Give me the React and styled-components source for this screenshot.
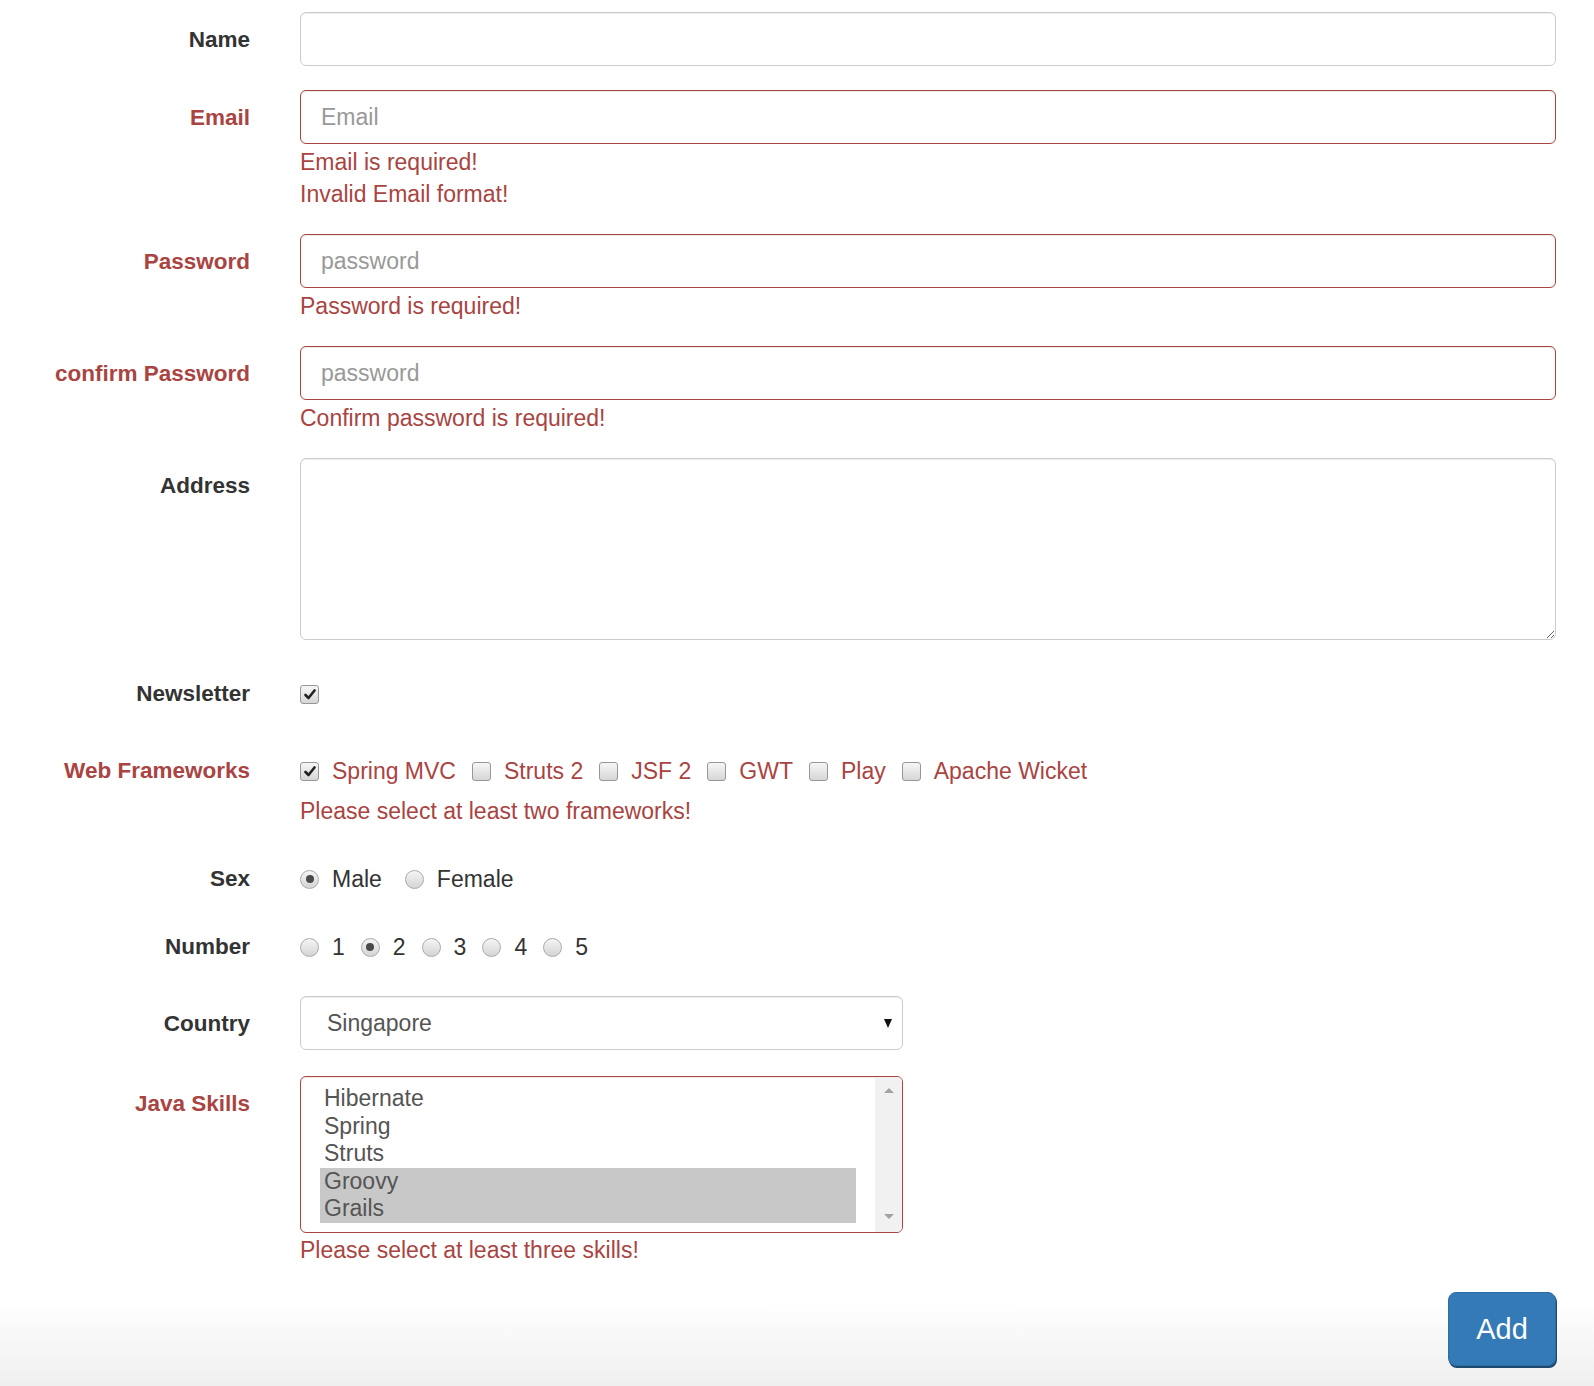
import React from "react";
import styled, { createGlobalStyle } from "styled-components";

const GlobalStyle = createGlobalStyle`
    html, body {
        margin: 0;
        padding: 0;
    }

    body {
        min-height: 1386px;
        font-family: "Liberation Sans", Arial, sans-serif;
        font-size: 23px;
        color: #333;
        background: linear-gradient(to bottom, #fff 0, #fff 1300px, #efefef 1386px);
    }

    * {
        box-sizing: border-box;
    }
`;

const Form = styled.form`
    padding: 12px 38px 0 0;
`;

const Group = styled.div`
    display: grid;
    grid-template-columns: 250px 1fr;
    column-gap: 50px;
    margin-bottom: ${(p) => p.$mb ?? 24}px;
`;

const Label = styled.label`
    text-align: right;
    font-weight: 700;
    font-size: 22.5px;
    line-height: 32px;
    padding-top: ${(p) => p.$pt ?? 12}px;
    color: ${(p) => (p.$error ? "#a94442" : "#333")};
`;

const Control = styled.div`
    display: flex;
    flex-direction: column;
    align-items: flex-start;
`;

const Input = styled.input`
    width: 100%;
    height: 54px;
    padding: 0 20px;
    font: inherit;
    color: #555;
    background: #fff;
    border: 1px solid ${(p) => (p.$error ? "#a94442" : "#ccc")};
    border-radius: 6px;
    box-shadow: inset 0 1px 1px rgba(0, 0, 0, 0.075);
    outline: none;

    &::placeholder {
        color: #999;
    }
`;

const TextArea = styled.textarea`
    width: 100%;
    height: 182px;
    padding: 10px 20px;
    font: inherit;
    color: #555;
    border: 1px solid #ccc;
    border-radius: 6px;
    box-shadow: inset 0 1px 1px rgba(0, 0, 0, 0.075);
    resize: vertical;
    outline: none;
`;

const Help = styled.div`
    color: #a94442;
    line-height: 32px;
    margin-top: ${(p) => p.$mt ?? 2}px;
`;

const CheckRow = styled.div`
    display: flex;
    align-items: center;
    height: 32px;
    margin-top: 14px;
    color: ${(p) => (p.$error ? "#a94442" : "#333")};
`;

const Item = styled.span`
    display: inline-flex;
    align-items: center;
    gap: 13px;
    margin-right: ${(p) => p.$gap ?? 16}px;
    line-height: 32px;
`;

const Box = styled.span`
    display: inline-flex;
    align-items: center;
    justify-content: center;
    width: 19px;
    height: 19px;
    border: 1px solid #979797;
    border-radius: 3px;
    background: linear-gradient(to bottom, #f6f6f6, #d6d6d6);
`;

const Round = styled(Box)`
    border-radius: 50%;
    border-color: #aaa;
    background: linear-gradient(to bottom, #f5f5f5, #d4d4d4);

    &::after {
        content: "";
        display: ${(p) => (p.$on ? "block" : "none")};
        width: 8px;
        height: 8px;
        border-radius: 50%;
        background: #4a4a4a;
    }
`;

function Check({ on, label, gap }) {
    return (
        <Item $gap={gap}>
            <Box role="checkbox" aria-checked={on}>
                {on && (
                    <svg width="12" height="11" viewBox="0 0 12 11">
                        <path d="M1.5 6 L4.5 9 L10.5 1.5" fill="none" stroke="#222" strokeWidth="2.6" strokeLinecap="round" strokeLinejoin="round" />
                    </svg>
                )}
            </Box>
            {label}
        </Item>
    );
}

function Radio({ on, label, gap }) {
    return (
        <Item $gap={gap}>
            <Round role="radio" aria-checked={on} $on={on} />
            {label}
        </Item>
    );
}

const SelectWrap = styled.div`
    position: relative;
    width: 603px;
`;

const Select = styled.select`
    appearance: none;
    width: 100%;
    height: 54px;
    padding: 0 40px 0 26px;
    font: inherit;
    color: #555;
    background: #fff;
    border: 1px solid #ccc;
    border-radius: 6px;
    box-shadow: inset 0 1px 1px rgba(0, 0, 0, 0.075);
    outline: none;
`;

const Arrow = styled.span`
    position: absolute;
    right: 11px;
    top: 23px;
    width: 0;
    height: 0;
    border-left: 4px solid transparent;
    border-right: 4px solid transparent;
    border-top: 9px solid #111;
    pointer-events: none;
`;

const ListBox = styled.div`
    display: flex;
    width: 603px;
    height: 157px;
    background: #fff;
    border: 1px solid #a94442;
    border-radius: 6px;
    box-shadow: inset 0 1px 1px rgba(0, 0, 0, 0.075);
    overflow: hidden;
`;

const Options = styled.div`
    flex: 1;
    padding: 8px 19px 0 19px;
`;

const Option = styled.div`
    height: 27.5px;
    line-height: 27.5px;
    padding-left: 4px;
    color: #555;
    background: ${(p) => (p.$selected ? "#c8c8c8" : "transparent")};
`;

const ScrollTrack = styled.div`
    width: 27px;
    background: #f1f1f1;
    display: flex;
    flex-direction: column;
    justify-content: space-between;
    align-items: center;
    padding: 11px 0 13px;
`;

const Tri = styled.span`
    width: 0;
    height: 0;
    border-left: 5px solid transparent;
    border-right: 5px solid transparent;
    ${(p) => (p.$up ? "border-bottom: 5px solid #a3a3a3;" : "border-top: 5px solid #a3a3a3;")}
`;

const Actions = styled.div`
    display: flex;
    justify-content: flex-end;
`;

const Button = styled.button`
    width: 108px;
    height: 74px;
    font-family: inherit;
    font-size: 29px;
    color: #fff;
    background: #337ab7;
    border: 1px solid #2e6da4;
    border-radius: 8px;
    box-shadow: 1px 2px 0 #1f4a70;
    cursor: pointer;
`;

const frameworks = [
    ["Spring MVC", true],
    ["Struts 2", false],
    ["JSF 2", false],
    ["GWT", false],
    ["Play", false],
    ["Apache Wicket", false],
];

const skills = [
    ["Hibernate", false],
    ["Spring", false],
    ["Struts", false],
    ["Groovy", true],
    ["Grails", true],
];

export default function App() {
    return (
        <>
            <GlobalStyle />
            <Form onSubmit={(e) => e.preventDefault()}>
                <Group>
                    <Label>Name</Label>
                    <Control><Input type="text" /></Control>
                </Group>

                <Group>
                    <Label $error>Email</Label>
                    <Control>
                        <Input $error type="text" placeholder="Email" />
                        <Help>Email is required!<br />Invalid Email format!</Help>
                    </Control>
                </Group>

                <Group>
                    <Label $error>Password</Label>
                    <Control>
                        <Input $error type="password" placeholder="password" />
                        <Help>Password is required!</Help>
                    </Control>
                </Group>

                <Group>
                    <Label $error>confirm Password</Label>
                    <Control>
                        <Input $error type="password" placeholder="password" />
                        <Help>Confirm password is required!</Help>
                    </Control>
                </Group>

                <Group>
                    <Label>Address</Label>
                    <Control><TextArea /></Control>
                </Group>

                <Group $mb={31}>
                    <Label $pt={14}>Newsletter</Label>
                    <Control>
                        <CheckRow><Check on /></CheckRow>
                    </Control>
                </Group>

                <Group $mb={22}>
                    <Label $pt={14} $error>Web Frameworks</Label>
                    <Control>
                        <CheckRow $error>
                            {frameworks.map(([name, on]) => <Check key={name} on={on} label={name} />)}
                        </CheckRow>
                        <Help $mt={8}>Please select at least two frameworks!</Help>
                    </Control>
                </Group>

                <Group $mb={22}>
                    <Label $pt={14}>Sex</Label>
                    <Control>
                        <CheckRow>
                            <Radio on label="Male" gap={23} />
                            <Radio label="Female" />
                        </CheckRow>
                    </Control>
                </Group>

                <Group $mb={33}>
                    <Label $pt={14}>Number</Label>
                    <Control>
                        <CheckRow>
                            {[1, 2, 3, 4, 5].map((n) => <Radio key={n} on={n === 2} label={n} />)}
                        </CheckRow>
                    </Control>
                </Group>

                <Group $mb={26}>
                    <Label>Country</Label>
                    <Control>
                        <SelectWrap>
                            <Select defaultValue="SG">
                                <option value="SG">Singapore</option>
                            </Select>
                            <Arrow />
                        </SelectWrap>
                    </Control>
                </Group>

                <Group $mb={26}>
                    <Label $error>Java Skills</Label>
                    <Control>
                        <ListBox role="listbox" aria-multiselectable="true">
                            <Options>
                                {skills.map(([name, sel]) => (
                                    <Option key={name} role="option" aria-selected={sel} $selected={sel}>{name}</Option>
                                ))}
                            </Options>
                            <ScrollTrack>
                                <Tri $up />
                                <Tri />
                            </ScrollTrack>
                        </ListBox>
                        <Help $mt={1}>Please select at least three skills!</Help>
                    </Control>
                </Group>

                <Actions>
                    <Button type="submit">Add</Button>
                </Actions>
            </Form>
        </>
    );
}
